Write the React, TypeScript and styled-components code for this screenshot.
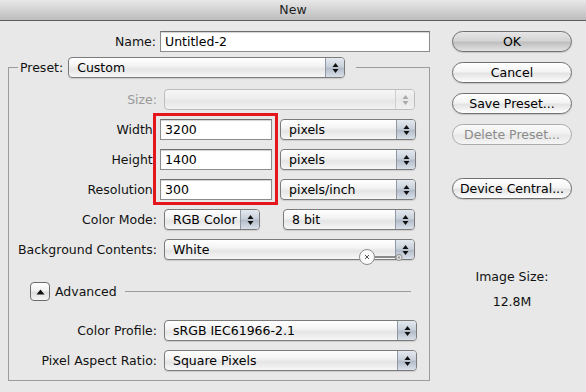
import React from 'react';
import styled, { createGlobalStyle } from 'styled-components';

const Global = createGlobalStyle`
  html, body { margin: 0; padding: 0; background: #e8e8e8; }
  body {
    font-family: "DejaVu Sans", "Lucida Grande", sans-serif;
    font-size: 12.5px;
    color: #111;
  }
  * { box-sizing: border-box; }
`;

const Window = styled.div`
  width: 586px;
  height: 392px;
  background: #e8e8e8;
  overflow: hidden;
  display: flex;
  flex-direction: column;
`;

const TitleBar = styled.div`
  flex: none;
  height: 21px;
  background: linear-gradient(#e8e8e8, #d2d2d2 50%, #bdbdbd);
  border-bottom: 1px solid #5c5c5c;
  display: flex;
  align-items: center;
  justify-content: center;
  color: #1e1e1e;
  line-height: 1;
`;

const Body = styled.div`
  display: flex;
  flex: 1;
`;

const LeftColumn = styled.div`
  width: 430px;
  padding: 10px 0 0 8px;
  display: flex;
  flex-direction: column;
`;

const RightColumn = styled.div`
  margin-left: 22px;
  padding-top: 10px;
  width: 120px;
  display: flex;
  flex-direction: column;
`;

const NameRow = styled.div`
  display: flex;
  align-items: center;
  height: 21px;
`;

const Label = styled.span<{ $w?: number; $disabled?: boolean }>`
  width: ${(p) => p.$w ?? 139}px;
  flex: none;
  text-align: right;
  white-space: nowrap;
  color: ${(p) => (p.$disabled ? '#9a9a9a' : '#111')};
`;

const TextField = styled.div<{ $w: number; $ml?: number }>`
  width: ${(p) => p.$w}px;
  height: 21px;
  margin-left: ${(p) => p.$ml ?? 3}px;
  background: #fff;
  border: 1px solid #8c8c8c;
  border-top-color: #6e6e6e;
  box-shadow: inset 0 1px 1px rgba(0, 0, 0, 0.18);
  padding: 0 4px;
  display: flex;
  align-items: center;
  color: #000;
  flex: none;
`;

const Group = styled.fieldset`
  margin: 5px 0 0 0;
  width: 422px;
  border: 1px solid #9c9c9c;
  padding: 0 12px 9px 9px;
  min-width: 0;
`;

const Legend = styled.legend`
  padding: 0 11px 0 2px;
  display: flex;
  align-items: center;
  height: 21px;
`;

const LegendLabel = styled.span`
  margin-right: 5px;
`;

const Rows = styled.div<{ $pt?: number }>`
  padding-top: ${(p) => p.$pt ?? 11}px;
  display: flex;
  flex-direction: column;
  gap: 9px;
`;

const Row = styled.div`
  display: flex;
  align-items: center;
  height: 21px;
`;

const Measures = styled.div`
  position: relative;
  display: flex;
  flex-direction: column;
  gap: 9px;
`;

const Highlight = styled.div`
  position: absolute;
  left: 135px;
  top: -6px;
  width: 125px;
  height: 92px;
  border: 3px solid #e4151b;
  pointer-events: none;
`;

const SelectWrap = styled.div<{ $ml?: number }>`
  position: relative;
  margin-left: ${(p) => p.$ml ?? 7}px;
  flex: none;
`;

const SelectBox = styled.div<{ $w: number; $disabled?: boolean }>`
  width: ${(p) => p.$w}px;
  height: 21px;
  border: 1px solid ${(p) => (p.$disabled ? '#bdbdbd' : '#7b7b7b')};
  border-radius: 4px;
  background: ${(p) =>
    p.$disabled
      ? 'linear-gradient(#f6f6f6, #eeeeee 45%, #e6e6e6 55%, #f2f2f2)'
      : 'linear-gradient(#ffffff, #f4f4f4 40%, #e5e5e5 58%, #f7f7f7)'};
  box-shadow: ${(p) => (p.$disabled ? 'none' : '0 1px 1px rgba(0,0,0,0.12)')};
  display: flex;
  align-items: center;
  color: #000;
`;

const SelectText = styled.span`
  flex: 1;
  padding-left: 8px;
  white-space: nowrap;
  overflow: hidden;
`;

const Stepper = styled.span<{ $disabled?: boolean }>`
  width: 19px;
  height: 100%;
  flex: none;
  border-left: 1px solid ${(p) => (p.$disabled ? '#cfcfcf' : '#8f98a4')};
  border-radius: 0 3px 3px 0;
  background: ${(p) =>
    p.$disabled
      ? 'linear-gradient(#f4f4f4, #e9e9e9 50%, #f0f0f0)'
      : 'linear-gradient(#e4e9ef, #c9d1db 45%, #b3bdca 55%, #d9e0e8)'};
  display: flex;
  align-items: center;
  justify-content: center;
`;

const Overlay = styled.svg`
  position: absolute;
  left: 192px;
  top: 7px;
  overflow: visible;
  pointer-events: none;
`;

const AdvancedRow = styled.div`
  display: flex;
  align-items: center;
  height: 19px;
  margin: 22px 0 19px 0;
`;

const Disclosure = styled.span`
  width: 20px;
  height: 19px;
  margin-left: 12px;
  border: 1px solid #6c6c6c;
  border-radius: 4px;
  background: linear-gradient(#ffffff, #f0f0f0 45%, #dedede 55%, #f6f6f6);
  display: flex;
  align-items: center;
  justify-content: center;
  flex: none;
`;

const AdvancedText = styled.span`
  margin-left: 5px;
`;

const Rule = styled.span`
  flex: 1;
  height: 1px;
  background: #9c9c9c;
  margin: 0 6px 0 8px;
`;

const PushButton = styled.button<{ $primary?: boolean; $mt?: number }>`
  width: 120px;
  height: 21px;
  margin-top: ${(p) => p.$mt ?? 10}px;
  border-radius: 11px;
  border: 1px solid #707070;
  padding: 0;
  font: inherit;
  color: #000;
  background: ${(p) =>
    p.$primary
      ? 'linear-gradient(#e6e6e6, #d4d4d4 45%, #bfbfbf 55%, #e2e2e2)'
      : 'linear-gradient(#ffffff, #f4f4f4 45%, #e3e3e3 55%, #fdfdfd)'};
  box-shadow: 0 1px 1px rgba(0, 0, 0, 0.15);
  &:first-child { margin-top: 0; }
  &:disabled {
    color: #8a8a8a;
    border-color: #ababab;
    box-shadow: none;
    background: linear-gradient(#fafafa, #f0f0f0 45%, #e8e8e8 55%, #f5f5f5);
  }
`;

const SizeInfo = styled.div`
  margin-top: 70px;
  text-align: center;
  display: flex;
  flex-direction: column;
  gap: 10px;
  line-height: 15px;
`;

const Arrows = ({ disabled }: { disabled?: boolean }) => (
  <svg width="7" height="12" viewBox="0 0 7 12">
    <path d="M3.5 1 L6.5 5 L0.5 5 Z" fill={disabled ? '#aaaaaa' : '#111'} />
    <path d="M0.5 7 L6.5 7 L3.5 11 Z" fill={disabled ? '#aaaaaa' : '#111'} />
  </svg>
);

const Select = ({
  value,
  w,
  ml,
  disabled,
  children,
}: {
  value: string;
  w: number;
  ml?: number;
  disabled?: boolean;
  children?: React.ReactNode;
}) => (
  <SelectWrap $ml={ml}>
    <SelectBox $w={w} $disabled={disabled}>
      <SelectText>{value}</SelectText>
      <Stepper $disabled={disabled}>
        <Arrows disabled={disabled} />
      </Stepper>
    </SelectBox>
    {children}
  </SelectWrap>
);

export default function App() {
  return (
    <>
      <Global />
      <Window>
        <TitleBar>New</TitleBar>
        <Body>
          <LeftColumn>
            <NameRow>
              <Label $w={148}>Name:</Label>
              <TextField $w={270} $ml={4}>Untitled-2</TextField>
            </NameRow>
            <Group>
              <Legend>
                <LegendLabel>Preset:</LegendLabel>
                <Select value="Custom" w={277} ml={0} />
              </Legend>
              <Rows>
                <Row>
                  <Label $disabled>Size:</Label>
                  <Select value="" w={251} disabled />
                </Row>
                <Measures>
                  <Row>
                    <Label>Width:</Label>
                    <TextField $w={112}>3200</TextField>
                    <Select value="pixels" w={136} ml={8} />
                  </Row>
                  <Row>
                    <Label>Height:</Label>
                    <TextField $w={112}>1400</TextField>
                    <Select value="pixels" w={136} ml={8} />
                  </Row>
                  <Row>
                    <Label>Resolution:</Label>
                    <TextField $w={112}>300</TextField>
                    <Select value="pixels/inch" w={136} ml={8} />
                  </Row>
                  <Highlight />
                </Measures>
                <Row>
                  <Label>Color Mode:</Label>
                  <Select value="RGB Color" w={96} />
                  <Select value="8 bit" w={132} ml={23} />
                </Row>
                <Row>
                  <Label>Background Contents:</Label>
                  <Select value="White" w={251}>
                    <Overlay width="50" height="20" viewBox="0 0 50 20">
                      <line x1="19" y1="11" x2="41" y2="11" stroke="#8a8a8a" strokeWidth="2" />
                      <circle cx="11" cy="11" r="7.5" fill="#fafafa" stroke="#8c8c8c" strokeWidth="1" />
                      <path d="M9 9 L13 13 M13 9 L9 13" stroke="#555" strokeWidth="1" />
                      <circle cx="43" cy="11.5" r="3" fill="#e8e8e8" stroke="#8a8a8a" strokeWidth="1" />
                      <circle cx="43" cy="11.5" r="1.2" fill="#9a9a9a" />
                    </Overlay>
                  </Select>
                </Row>
              </Rows>
              <AdvancedRow>
                <Disclosure>
                  <svg width="9" height="6" viewBox="0 0 9 6">
                    <path d="M4.5 0.5 L8.5 5.5 L0.5 5.5 Z" fill="#111" />
                  </svg>
                </Disclosure>
                <AdvancedText>Advanced</AdvancedText>
                <Rule />
              </AdvancedRow>
              <Rows $pt={0}>
                <Row>
                  <Label>Color Profile:</Label>
                  <Select value="sRGB IEC61966-2.1" w={253} />
                </Row>
                <Row>
                  <Label>Pixel Aspect Ratio:</Label>
                  <Select value="Square Pixels" w={253} />
                </Row>
              </Rows>
            </Group>
          </LeftColumn>
          <RightColumn>
            <PushButton $primary>OK</PushButton>
            <PushButton>Cancel</PushButton>
            <PushButton>Save Preset...</PushButton>
            <PushButton disabled>Delete Preset...</PushButton>
            <PushButton $mt={33}>Device Central...</PushButton>
            <SizeInfo>
              <span>Image Size:</span>
              <span>12.8M</span>
            </SizeInfo>
          </RightColumn>
        </Body>
      </Window>
    </>
  );
}
